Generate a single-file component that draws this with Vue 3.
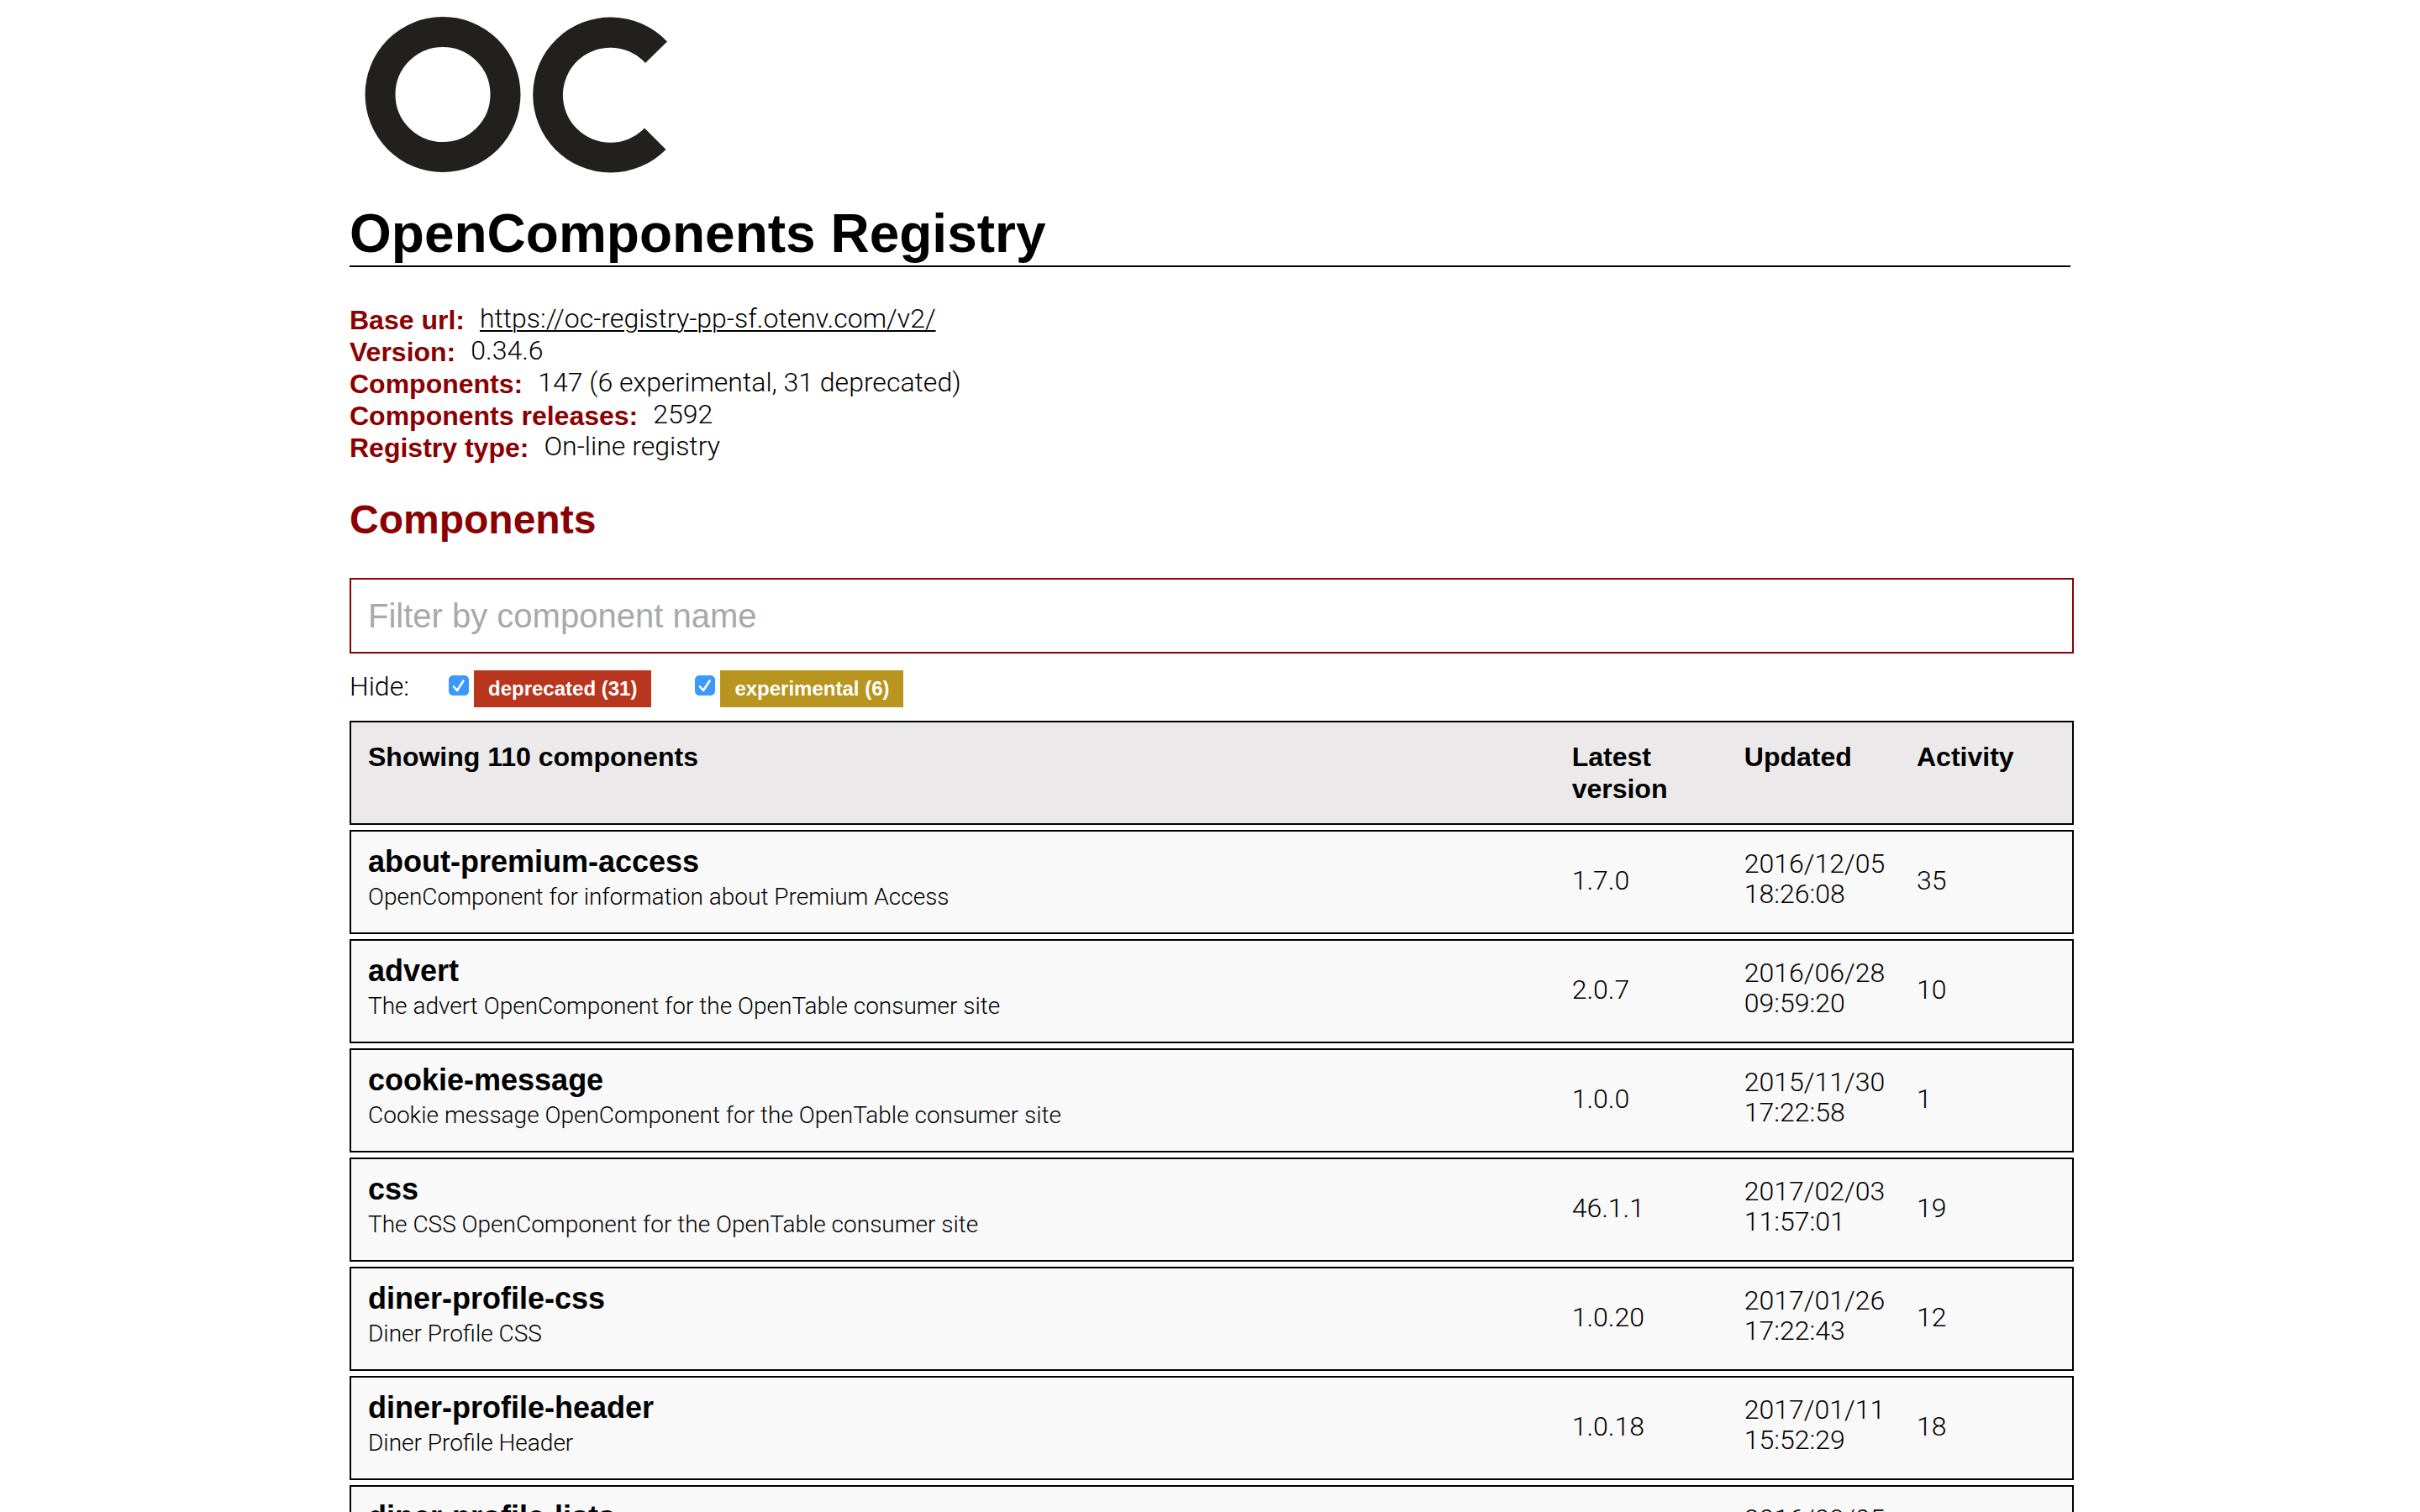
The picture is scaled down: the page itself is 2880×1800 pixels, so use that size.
<script setup>
import { computed, ref } from 'vue'

const info = [
  { label: 'Base url:', value: 'https://oc-registry-pp-sf.otenv.com/v2/', link: true },
  { label: 'Version:', value: '0.34.6' },
  { label: 'Components:', value: '147 (6 experimental, 31 deprecated)' },
  { label: 'Components releases:', value: '2592' },
  { label: 'Registry type:', value: 'On-line registry' }
]

const filters = ref([
  { id: 'deprecated', count: 31, checked: true },
  { id: 'experimental', count: 6, checked: true }
])

const components = [
  { name: 'about-premium-access', description: 'OpenComponent for information about Premium Access', version: '1.7.0', date: '2016/12/05', time: '18:26:08', activity: 35 },
  { name: 'advert', description: 'The advert OpenComponent for the OpenTable consumer site', version: '2.0.7', date: '2016/06/28', time: '09:59:20', activity: 10 },
  { name: 'cookie-message', description: 'Cookie message OpenComponent for the OpenTable consumer site', version: '1.0.0', date: '2015/11/30', time: '17:22:58', activity: 1 },
  { name: 'css', description: 'The CSS OpenComponent for the OpenTable consumer site', version: '46.1.1', date: '2017/02/03', time: '11:57:01', activity: 19 },
  { name: 'diner-profile-css', description: 'Diner Profile CSS', version: '1.0.20', date: '2017/01/26', time: '17:22:43', activity: 12 },
  { name: 'diner-profile-header', description: 'Diner Profile Header', version: '1.0.18', date: '2017/01/11', time: '15:52:29', activity: 18 },
  { name: 'diner-profile-lists', description: 'Diner Profile Lists', version: '1.0.9', date: '2016/09/05', time: '10:12:41', activity: 9 }
]

const query = ref('')
const visible = computed(() => components.filter(c => c.name.includes(query.value.toLowerCase())))
</script>

<template>
  <main class="page">
    <svg class="logo" viewBox="0 0 400 226" role="img" aria-label="OC">
      <circle cx="111" cy="112.5" r="74.5" fill="none" stroke="#21201e" stroke-width="36" />
      <path d="M378 49.5A92.5 92.5 0 1 0 376.500 178L351 152.500A56.500 56.500 0 1 1 352 75Z" fill="#21201e" />
    </svg>
    <h1>OpenComponents Registry</h1>

    <dl class="info">
      <div v-for="item in info" :key="item.label" class="info-line">
        <dt>{{ item.label }}</dt>
        <dd>
          <a v-if="item.link" :href="item.value">{{ item.value }}</a>
          <template v-else>{{ item.value }}</template>
        </dd>
      </div>
    </dl>

    <h2>Components</h2>

    <input v-model="query" class="search" type="text" placeholder="Filter by component name" aria-label="Filter by component name" />

    <div class="filters">
      <span class="hide">Hide:</span>
      <label v-for="f in filters" :key="f.id" class="filter">
        <span class="tick">
          <input v-model="f.checked" type="checkbox" />
          <svg v-if="f.checked" viewBox="0 0 24 24" aria-hidden="true">
            <path d="M6 13.500L10 18L17.500 6.500" fill="none" stroke="#fff" stroke-width="2.600" stroke-linecap="round" stroke-linejoin="round" />
          </svg>
        </span>
        <span class="badge" :class="f.id">{{ f.id }} ({{ f.count }})</span>
      </label>
    </div>

    <table>
      <thead>
        <tr>
          <th>Showing 110 components</th>
          <th class="tenth">Latest<br />version</th>
          <th class="tenth">Updated</th>
          <th class="last">Activity</th>
        </tr>
      </thead>
      <tbody>
        <tr v-for="c in visible" :key="c.name">
          <td>
            <div class="name">{{ c.name }}</div>
            <div class="description">{{ c.description }}</div>
          </td>
          <td>{{ c.version }}</td>
          <td class="updated">{{ c.date }}<br />{{ c.time }}</td>
          <td>{{ c.activity }}</td>
        </tr>
      </tbody>
    </table>
  </main>
</template>

<style>
body {
  background: #fff;
}
</style>

<style scoped>
.page {
  box-sizing: border-box;
  width: 72%;
  max-width: 2048px;
  margin: 0 auto;
  color: #000;
  font: 300 32px/36px Roboto, "Liberation Sans", sans-serif;
}

.logo {
  display: block;
  width: 400px;
  height: 226px;
}

h1,
h2,
dt,
th,
.name,
.badge {
  font-family: "Liberation Sans", Arial, sans-serif;
  font-weight: 700;
}

h1 {
  margin: 16px 0 44px;
  padding-bottom: 2px;
  border-bottom: 2px solid #000;
  font-size: 64px;
  line-height: 72px;
}

h2 {
  margin: 38px 0 40px;
  color: #8b0000;
  font-size: 48px;
  line-height: 58px;
}

.info {
  margin: 0;
}

.info-line {
  display: flex;
  align-items: flex-start;
  gap: 18px;
}

dt {
  color: #8b0000;
  line-height: 38px;
}

dd {
  margin: 0;
  line-height: 34px;
}

a {
  color: inherit;
  text-decoration-thickness: 2px;
  text-underline-offset: 3px;
}

.search {
  display: block;
  box-sizing: border-box;
  width: calc(100% + 4px);
  height: 90px;
  padding: 0 20px;
  border: 2px solid #8b0000;
  border-radius: 0;
  outline: none;
  background: #fff;
  color: #000;
  font: 400 40px "Liberation Sans", Arial, sans-serif;
}

.search::placeholder {
  color: #a9a9a9;
  opacity: 1;
}

.filters {
  display: flex;
  align-items: flex-start;
  gap: 52px;
  margin: 20px 0 16px;
}

.hide {
  width: 66px;
  line-height: 38px;
}

.filter {
  display: flex;
  align-items: flex-start;
  gap: 6px;
}

.tick {
  position: relative;
  width: 24px;
  height: 24px;
  margin-top: 6px;
}

.tick input {
  display: block;
  width: 24px;
  height: 24px;
  margin: 0;
  appearance: none;
  border: 1px solid #a9a9a9;
  border-radius: 5px;
}

.tick input:checked {
  border-color: #3b99fc;
  background: #3b99fc;
}

.tick svg {
  position: absolute;
  inset: 0;
  pointer-events: none;
}

.badge {
  padding: 0 17px;
  color: #fff;
  font-size: 24px;
  line-height: 44px;
}

.deprecated {
  background: #b9361e;
}

.experimental {
  background: #b8951e;
}

table {
  width: calc(100% + 4px);
  margin: -6px 0 16px;
  table-layout: fixed;
  border-collapse: separate;
  border-spacing: 0 6px;
}

.tenth {
  width: 10%;
}

.last {
  width: 187px;
}

th,
td {
  box-sizing: border-box;
  height: 124px;
  padding: 0 0 4px;
  border: solid #000;
  border-width: 2px 0;
  background: #f9f9f9;
  text-align: left;
  vertical-align: middle;
}

th {
  padding-top: 22px;
  background: #ebe9ea;
  line-height: 38px;
  vertical-align: top;
}

th:first-child,
td:first-child {
  padding-left: 20px;
  border-left-width: 2px;
}

th:last-child,
td:last-child {
  border-right-width: 2px;
}

.updated {
  padding-bottom: 8px;
}

.name {
  font-size: 36px;
  line-height: 40px;
}

.description {
  font-size: 28px;
  line-height: 44px;
}
</style>
